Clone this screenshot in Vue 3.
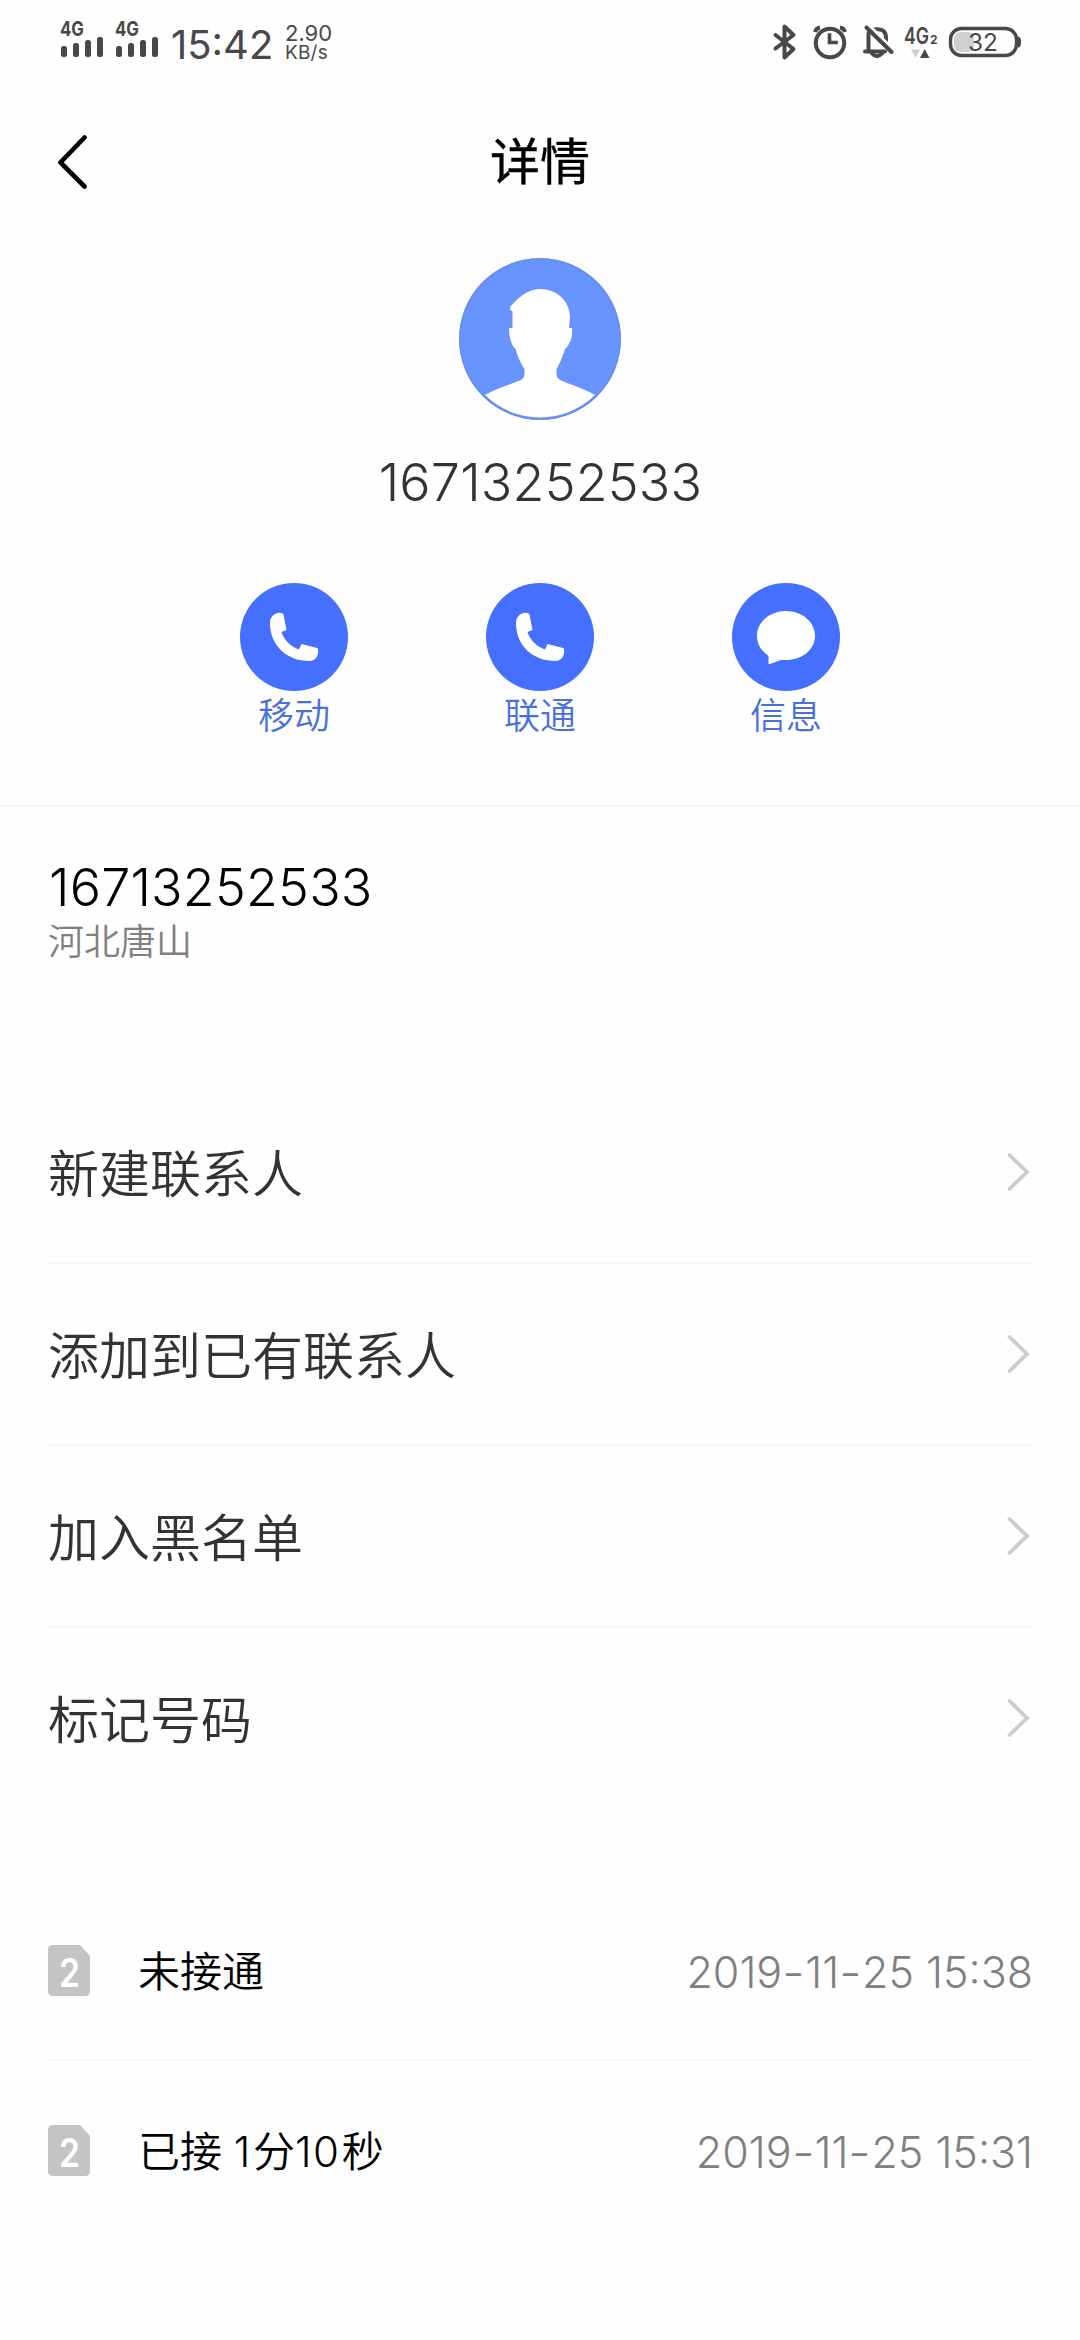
<script setup>
const phone = '16713252533'

const actions = [
  { label: '移动', icon: 'phone' },
  { label: '联通', icon: 'phone' },
  { label: '信息', icon: 'message' },
]

const menu = ['新建联系人', '添加到已有联系人', '加入黑名单', '标记号码']

const logs = [
  { sim: 2, status: '未接通', time: '2019-11-25 15:38' },
  { sim: 2, status: '已接 1分10秒', time: '2019-11-25 15:31' },
]

// Splits a label so that runs of digits can be spaced on their own
const runs = (text) => text.split(/(\d+)/).filter(Boolean)
const isDigits = (run) => /^\d+$/.test(run)
// Splits a date so that its dashes can be widened
const dateParts = (text) => text.split(/(-)/)
</script>

<template>
  <div class="page">
    <div class="status">
      <div class="status-left">
        <svg v-for="n in 2" :key="n" class="signal" width="44" height="50" viewBox="0 -10 44 50">
          <text x="0" y="16" class="net" textLength="24" lengthAdjust="spacingAndGlyphs">4G</text>
          <g fill="#484848">
            <rect x="1" y="26" width="6" height="11" rx="2.5" />
            <rect x="13" y="23" width="6" height="14" rx="2.5" />
            <rect x="25" y="20" width="6" height="17" rx="2.5" />
            <rect x="37" y="17" width="6" height="20" rx="2.5" />
          </g>
        </svg>
        <span class="clock">15:42</span>
        <span class="speed"><span>2.90</span><span class="unit">KB/s</span></span>
      </div>
      <svg class="status-right" width="250" height="40" viewBox="770 22 250 40">
        <g fill="none" stroke="#484848" stroke-linecap="round" stroke-linejoin="round">
          <path d="M774.500 35L792.500 49L783.500 57.500V26.500L792.500 35L774.500 48.500" stroke-width="4" />
          <circle cx="829" cy="43" r="14.200" stroke-width="4" />
          <path d="M828.500 35V42.500H835" stroke-width="3.600" stroke-linecap="square" stroke-linejoin="miter" />
          <path d="M814 32Q815 28 819 27.500M844 32Q843 28 839 27.500" stroke-width="4" stroke-linecap="butt" />
          <path d="M867.500 33V50.500M864 51.500H884M873 29.500Q885 27.500 885 38V43" stroke-width="4" />
          <path d="M869 26L893 50" stroke="#fefefe" stroke-width="2.500" />
          <path d="M865.500 27.500L890.500 52" stroke-width="4" />
          <path d="M871 53.500Q876 59 881 53.500" stroke-width="4" />
        </g>
        <text x="903" y="43.500" class="lte" textLength="25" lengthAdjust="spacingAndGlyphs">4G</text>
        <text x="929" y="43.500" class="lte-sim">2</text>
        <path d="M910 49.500H919L914.500 58Z" fill="#ccc" />
        <path d="M919 58H928.500L923.700 49Z" fill="#484848" />
        <rect x="953" y="32" width="20" height="20" rx="6" fill="#d0d0d0" />
        <rect x="949.500" y="28.500" width="66" height="27" rx="11" fill="none" stroke="#484848" stroke-width="3.400" />
        <path d="M1017 36.500Q1020.500 37 1020 42Q1020.500 47 1017 47.500Z" fill="#484848" />
        <text x="967" y="51" class="battery" textLength="30" lengthAdjust="spacingAndGlyphs">32</text>
      </svg>
    </div>

    <header class="titlebar">
      <svg class="back" width="30" height="56" viewBox="0 0 30 56">
        <path d="M26.500 3.500L2.500 28.500L26.500 52.500" fill="none" stroke="#000" stroke-width="4.600" stroke-linecap="round" />
      </svg>
      <h1>详情</h1>
    </header>

    <section class="profile">
      <svg class="avatar" width="162" height="162" viewBox="0 0 162 162">
        <circle cx="81" cy="81" r="81" fill="#6794ff" />
        <path
          fill="#fff"
          d="M51 49C58 41 68 31 81 31C98 31 111 43 111 60L110 70H113Q114 84 106 91C103 100 101 105 97.500 111V117Q98 120 101 122C112 127 124 130 136 137A78.500 78.500 0 0 1 26 137C38 130 50 127 62 122Q66 119 65.500 115V111C61 104 59 99 56.500 91C52 87 50 78 50 70H53.500V53L51 52Z"
        />
        <circle cx="81" cy="81" r="80" fill="none" stroke="#6a8fe8" stroke-width="1.600" />
      </svg>
      <p class="number">{{ phone }}</p>
      <nav class="actions">
        <div v-for="a in actions" :key="a.label" class="action">
          <svg width="108" height="108" viewBox="0 0 108 108">
            <circle cx="54" cy="54" r="54" fill="#446fff" />
            <path
              v-if="a.icon === 'phone'"
              fill="#fff"
              d="M41 30C36 29 30 33 30 40C30 62 46 78 70 78C75 78 79 73 78 66Q78 65 77 65L61.500 61L59 66.500C51 64 44 57 41.500 49L46.500 47L43.500 31.500Q43 30 41 30Z"
            />
            <path
              v-else
              fill="#fff"
              d="M54 28C70 28 83 39 83 52.500C83 67 70 77 54 77Q51 77 49 77L38 81Q36.500 81.500 36.500 80V73C29 68 25 61 25 52.500C25 39 38 28 54 28Z"
            />
          </svg>
          <span>{{ a.label }}</span>
        </div>
      </nav>
    </section>

    <section class="location">
      <p class="number dark">{{ phone }}</p>
      <p class="region">河北唐山</p>
    </section>

    <ul class="menu">
      <li v-for="item in menu" :key="item">
        <span>{{ item }}</span>
        <svg width="24" height="40" viewBox="0 0 24 40">
          <path d="M3.500 3L21 20L3.500 37" fill="none" stroke="#ccc" stroke-width="3.800" stroke-linecap="round" />
        </svg>
      </li>
    </ul>

    <ul class="logs">
      <li v-for="log in logs" :key="log.time">
        <svg width="42" height="51" viewBox="0 0 42 51">
          <path d="M5 0H32L42 11V46Q42 51 37 51H5Q0 51 0 46V5Q0 0 5 0Z" fill="#c4c4c4" />
          <text x="11" y="41.500" textLength="21" lengthAdjust="spacingAndGlyphs" class="sim">{{ log.sim }}</text>
        </svg>
        <span class="state"><span v-for="(run, i) in runs(log.status)" :key="i" :class="{ digits: isDigits(run) }">{{ run }}</span></span>
        <time><span v-for="(part, i) in dateParts(log.time)" :key="i" :class="{ dash: part === '-' }">{{ part }}</span></time>
      </li>
    </ul>
  </div>
</template>

<style>
body {
  margin: 0;
  background: #fefefe;
}
</style>

<style scoped>
.page {
  width: 1080px;
  height: 2340px;
  overflow: hidden;
  background: #fefefe;
  font-family: Inter, "Noto Sans CJK SC", sans-serif;
  font-weight: 300;
  color: #000;
}
h1, p, ul {
  margin: 0;
  padding: 0;
  list-style: none;
}
svg {
  display: block;
  flex: none;
}
.status {
  height: 90px;
  display: flex;
  justify-content: space-between;
  padding: 0 59px 0 60px;
  box-sizing: border-box;
  color: #484848;
}
.status-left {
  display: flex;
  align-items: flex-start;
}
.signal {
  margin: 10px 11px 0 0;
}
.net {
  font: 700 20px Inter, sans-serif;
  fill: #484848;
}
.clock {
  margin: 21px 0 0 1px;
  width: 104px;
  font-size: 40px;
  line-height: 48px;
  font-weight: 400;
}
.speed {
  display: flex;
  flex-direction: column;
  margin: 23px 0 0 10px;
  font-size: 22px;
  line-height: 20px;
  font-weight: 400;
}
.unit {
  font-size: 19px;
  letter-spacing: 0.2px;
}
.status-right {
  margin-top: 22px;
}
.lte {
  font: 600 23px Inter, sans-serif;
  fill: #484848;
}
.lte-sim {
  font: 700 12px Inter, sans-serif;
  fill: #484848;
}
.battery {
  font: 400 24px Inter, sans-serif;
  fill: #484848;
}
.titlebar {
  height: 168px;
  display: grid;
  grid-template-columns: 58px 1fr 58px;
  padding-top: 44px;
  box-sizing: border-box;
}
.back {
  margin: 0 0 0 58px;
}
h1 {
  text-align: center;
  font-size: 50px;
  line-height: 56px;
  font-weight: 400;
  -webkit-text-stroke: 0.4px #000;
}
.profile {
  height: 549px;
  box-sizing: border-box;
  border-bottom: 2px solid #f6f6f6;
  display: flex;
  flex-direction: column;
  align-items: center;
}
.number {
  font-size: 52px;
  line-height: 60px;
  letter-spacing: 0.2px;
  color: #333;
  white-space: nowrap;
}
.profile .number {
  margin: 33px 0 0 1px;
}
.actions {
  display: flex;
  gap: 138px;
  margin-top: 70px;
}
.action {
  width: 108px;
  display: flex;
  flex-direction: column;
  align-items: center;
  font-size: 36px;
  line-height: 51px;
  font-weight: 350;
  color: #4a70dd;
}
.location {
  height: 275px;
  padding: 51px 48px 0;
  box-sizing: border-box;
}
.number.dark {
  margin-left: 1px;
  color: #000;
}
.region {
  font-size: 36px;
  line-height: 49px;
  font-weight: 350;
  color: #808080;
}
.menu {
  padding: 0 48px;
}
.menu li {
  height: 182px;
  box-sizing: border-box;
  border-bottom: 2px solid #f7f7f7;
  display: flex;
  align-items: center;
  justify-content: space-between;
  font-size: 51px;
  font-weight: 350;
  color: #333;
}
.menu li span {
  margin-bottom: 3px;
}
.menu li:last-child {
  border-color: transparent;
}
.menu svg {
  margin-right: 2px;
}
.logs {
  padding: 71px 48px 0;
}
.logs li {
  height: 180px;
  box-sizing: border-box;
  border-bottom: 2px solid #f8f8f8;
  display: flex;
  align-items: center;
}
.logs li:last-child {
  border-color: transparent;
}
.sim {
  font: 600 40px Inter, sans-serif;
  fill: #fff;
}
.state {
  margin: 0 0 3px 48px;
  font-size: 42px;
  font-weight: 350;
  white-space: pre;
}
.digits {
  letter-spacing: 1.6px;
  margin-right: 1px;
}
time {
  margin: 3px -1px 0 auto;
  font-size: 43px;
  font-kerning: none;
  color: #808080;
}
.dash {
  display: inline-block;
  width: 23px;
  text-align: center;
  transform: scaleX(1.15);
}
</style>
